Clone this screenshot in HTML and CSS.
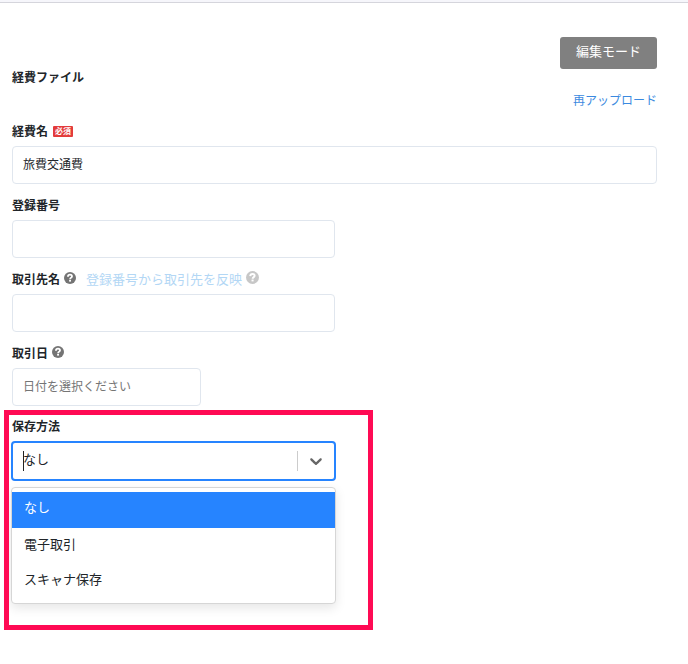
FILE: index.html
```
<!DOCTYPE html>
<html lang="ja">
<head>
<meta charset="utf-8">
<title>経費ファイル</title>
<link rel="stylesheet" href="styles.css">
</head>
<body>
<svg width="0" height="0" class="defs">
  <symbol id="help" viewBox="0 0 12 12">
    <circle cx="6" cy="6" r="6" fill="currentColor"/>
    <path d="M3.900 4.700C4 3.300 4.900 2.700 6 2.700c1.200 0 2 .7 2 1.700C8 5.700 6.100 5.600 6.100 7.200" fill="none" stroke="#fff" stroke-width="1.800"/>
    <rect x="5.100" y="7.900" width="1.900" height="1.700" fill="#fff"/>
  </symbol>
</svg>
<div class="topbar"></div>
<main class="page">
  <header class="head">
    <h1 class="label title">経費ファイル</h1>
    <div class="actions">
      <button class="edit">編集モード</button>
      <a class="reupload">再アップロード</a>
    </div>
  </header>
  <section class="field">
    <div class="label-row"><span class="label">経費名</span><span class="required">必須</span></div>
    <div class="input wide">旅費交通費</div>
  </section>
  <section class="field">
    <div class="label-row"><span class="label">登録番号</span></div>
    <div class="input"></div>
  </section>
  <section class="field">
    <div class="label-row"><span class="label">取引先名</span><svg class="help"><use href="#help"/></svg><a class="reflect">登録番号から取引先を反映</a><svg class="help faded"><use href="#help"/></svg></div>
    <div class="input"></div>
  </section>
  <section class="field">
    <div class="label-row"><span class="label">取引日</span><svg class="help"><use href="#help"/></svg></div>
    <div class="input date">日付を選択ください</div>
  </section>
  <section class="field method">
    <div class="label-row"><span class="label">保存方法</span></div>
    <div class="select">
      <span class="caret"></span><span class="value">なし</span>
      <span class="separator"></span>
      <svg class="chevron" viewBox="0 0 20 20"><path d="M4.516 7.548c0.436-0.446 1.043-0.481 1.576 0l3.908 3.747 3.908-3.747c0.533-0.481 1.141-0.446 1.574 0 0.436 0.445 0.408 1.197 0 1.615-0.406 0.418-4.695 4.502-4.695 4.502-0.217 0.223-0.502 0.335-0.787 0.335s-0.570-0.112-0.789-0.335c0 0-4.287-4.084-4.695-4.502s-0.436-1.170 0-1.615z"/></svg>
    </div>
    <div class="menu">
      <div class="option selected">なし</div>
      <div class="option">電子取引</div>
      <div class="option">スキャナ保存</div>
    </div>
    <div class="highlight"></div>
  </section>
</main>
</body>
</html>
```
FILE: styles.css
```
* { box-sizing: border-box; }
body {
  margin: 0;
  height: 664px;
  overflow: hidden;
  background: #fff;
  color: #212529;
  font-family: "Noto Sans CJK JP", sans-serif;
  font-size: 12px;
  line-height: 18px;
}
.defs { position: absolute; }
.topbar { height: 3px; background: #f6f6fb; border-bottom: 1px solid #d5d5dc; }
.page { width: 657px; padding: 34px 0 0 12px; }
.head { display: flex; justify-content: space-between; height: 73px; }
.label { margin: 0; font-size: 12px; font-weight: 700; line-height: 18px; }
.title { padding-top: 31px; }
.actions { display: flex; flex-direction: column; align-items: flex-end; }
.edit {
  width: 97px;
  height: 32px;
  padding: 0 0 5px;
  border: 0;
  border-radius: 3px;
  background: #808080;
  color: #fff;
  font: inherit;
  font-size: 13px;
}
.reupload { margin-top: 22px; color: #3b8ae0; }
.field { position: relative; height: 74px; }
.label-row { display: flex; align-items: center; height: 36px; padding-top: 6px; }
.required {
  width: 20px;
  height: 11px;
  margin: 1px 0 0 5px;
  border-radius: 1px;
  background: #e33b3b;
  color: #fff;
  font-size: 8px;
  font-weight: 700;
  line-height: 10px;
  text-align: center;
}
.help { width: 12px; height: 12px; margin: -2px 0 0 4px; color: #747474; }
.faded { margin-top: -3px; width: 13px; height: 13px; color: #c7c7c7; }
.reflect { margin-left: 10px; font-size: 13px; color: #b3d7f5; }
.input {
  width: 323px;
  height: 38px;
  padding: 8px 10px;
  border: 1px solid #e0e6ee;
  border-radius: 4px;
}
.wide { width: 645px; }
.date { width: 189px; color: #757575; }
.method .label-row { height: 35px; padding-top: 5px; }
.select {
  display: flex;
  align-items: center;
  width: 325px;
  height: 40px;
  margin-left: -1px;
  padding: 0 8px 0 10px;
  border: 2px solid #2684ff;
  border-radius: 4px;
  font-size: 13px;
}
.caret { width: 1px; height: 20px; background: #222; }
.value { flex: 1; margin: -4px 0 0 -1px; }
.separator { width: 1px; height: 20px; background: #ccc; }
.chevron { width: 20px; height: 20px; margin-left: 8px; fill: #666; }
.menu {
  width: 325px;
  height: 117px;
  margin: 6px 0 0 -1px;
  padding: 4px 0;
  border: 1px solid #d6d6d6;
  border-radius: 4px;
  background: #fff;
  box-shadow: 0 4px 11px rgba(0, 0, 0, .1);
  font-size: 13px;
}
.option { height: 35px; padding: 7px 12px; }
.selected { height: 36px; padding-top: 6px; background: #2684ff; color: #fff; }
.highlight {
  position: absolute;
  top: 4px;
  left: -8px;
  width: 369px;
  height: 220px;
  border: 5px solid #ff0a54;
}
```
